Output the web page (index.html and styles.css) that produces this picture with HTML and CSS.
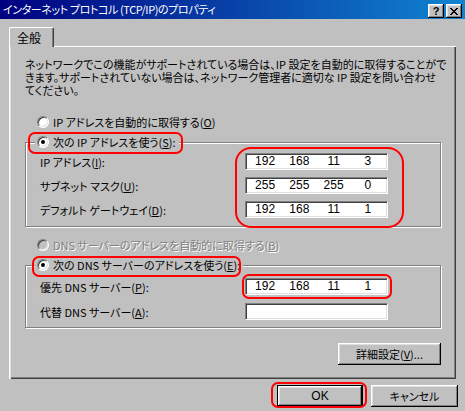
FILE: index.html
```html
<!DOCTYPE html>
<html lang="ja">
<head>
<meta charset="utf-8">
<title>インターネット プロトコル (TCP/IP)のプロパティ</title>
<link rel="stylesheet" href="styles.css">
</head>
<body>
<div class="titlebar">
  <span class="title">インターネット プロトコル (TCP/IP)のプロパティ</span>
  <div class="caption-buttons">
    <div class="cap-btn help">?</div>
    <div class="cap-btn close">
      <svg width="8" height="7" viewBox="0 0 8 7"><path d="M0 0h2v1h-2zM6 0h2v1h-2zM1 1h2v1h-2zM5 1h2v1h-2zM2 2h4v1h-4zM3 3h2v1h-2zM2 4h4v1h-4zM1 5h2v1h-2zM5 5h2v1h-2zM0 6h2v1h-2zM6 6h2v1h-2z" fill="#000"/></svg>
    </div>
  </div>
</div>

<div class="tabstrip">
  <div class="tab">全般</div>
  <div class="tab-fill"></div>
</div>

<div class="panel">
  <p class="intro">ネットワークでこの機能がサポートされている場合は、IP 設定を自動的に取得することがで<br>きます。サポートされていない場合は、ネットワーク管理者に適切な IP 設定を問い合わせ<br>てください。</p>

  <div class="radio-row row-auto-ip"><span class="radio"></span><span>IP アドレスを自動的に取得する(<u>O</u>)</span></div>

  <div class="group group-ip">
    <div class="legend"><span class="radio checked"></span><span>次の IP アドレスを使う(<u>S</u>):</span></div>
    <div class="field-row first"><span class="label">IP アドレス(<u>I</u>):</span><div class="ipbox"><span>192</span><span>168</span><span>11</span><span>3</span></div></div>
    <div class="field-row"><span class="label">サブネット マスク(<u>U</u>):</span><div class="ipbox"><span>255</span><span>255</span><span>255</span><span>0</span></div></div>
    <div class="field-row"><span class="label">デフォルト ゲートウェイ(<u>D</u>):</span><div class="ipbox"><span>192</span><span>168</span><span>11</span><span>1</span></div></div>
  </div>

  <div class="radio-row disabled row-auto-dns"><span class="radio"></span><span>DNS サーバーのアドレスを自動的に取得する(<u>B</u>)</span></div>

  <div class="group group-dns">
    <div class="legend"><span class="radio checked"></span><span>次の DNS サーバーのアドレスを使う(<u>E</u>):</span></div>
    <div class="field-row first"><span class="label">優先 DNS サーバー(<u>P</u>):</span><div class="ipbox"><span>192</span><span>168</span><span>11</span><span>1</span></div></div>
    <div class="field-row"><span class="label">代替 DNS サーバー(<u>A</u>):</span><div class="ipbox"><span></span><span></span><span></span><span></span></div></div>
  </div>

  <div class="btn btn-advanced">詳細設定(<u>V</u>)...</div>
</div>

<div class="dialog-buttons">
  <div class="btn btn-ok">OK</div>
  <div class="btn btn-cancel">キャンセル</div>
</div>

<div class="ring ring-a"></div>
<div class="ring ring-b"></div>
<div class="ring ring-c"></div>
<div class="ring ring-d"></div>
<div class="ring ring-e"></div>
</body>
</html>
```

FILE: styles.css
```css
* { box-sizing: border-box; }
html, body { margin: 0; padding: 0; }
body {
  width: 465px;
  height: 411px;
  overflow: hidden;
  position: relative;
  background: #c0c0c0;
  color: #000;
  font-family: "Noto Sans CJK JP", "Noto Sans", sans-serif;
  font-size: 11px;
  font-feature-settings: "palt" 1;
}
u { text-decoration: underline; text-underline-offset: 1px; }

/* title bar */
.titlebar {
  height: 19px;
  display: flex;
  justify-content: space-between;
  align-items: flex-start;
  padding: 0 3px;
  background: linear-gradient(to right, #000080, #1084d0);
  color: #fff;
}
.title { line-height: 19px; white-space: nowrap; letter-spacing: -0.4px; }
.caption-buttons { display: flex; gap: 2px; padding-top: 4px; }
.cap-btn {
  width: 16px;
  height: 14px;
  display: flex;
  align-items: center;
  justify-content: center;
  background: #c0c0c0;
  color: #000;
  box-shadow: inset -1px -1px #000, inset 1px 1px #fff, inset -2px -2px #808080, inset 2px 2px #dfdfdf;
}
.help {
  font-family: "Liberation Sans", sans-serif;
  font-weight: bold;
  font-size: 11px;
  line-height: 14px;
}

/* tabs */
.tabstrip {
  margin-top: 8px;
  width: 456px;
  height: 20px;
  padding-left: 9px;
  display: flex;
}
.tab {
  width: 45px;
  height: 20px;
  padding-left: 7px;
  display: flex;
  align-items: center;
  font-size: 12px;
  border-left: 1px solid #fff;
  border-top: 1px solid #fff;
  border-right: 1px solid #404040;
  border-radius: 2px 2px 0 0;
  box-shadow: inset -1px 0 #808080;
}
.tab-fill { flex: 1; border-bottom: 1px solid #fff; }

/* panel */
.panel {
  margin-left: 9px;
  width: 447px;
  height: 332px;
  padding: 10.5px 15px 0 16px;
  display: flex;
  flex-direction: column;
  box-shadow: inset 1px 0 #fff, inset 2px 0 #dfdfdf, inset -1px -1px #404040, inset -2px -2px #808080;
}
.intro {
  margin: 0;
  line-height: 13px;
  white-space: nowrap;
}

.radio-row {
  height: 16px;
  display: flex;
  align-items: center;
  gap: 4px;
  padding-left: 12px;
  white-space: nowrap;
}
.row-auto-ip { margin-top: 17.5px; }
.row-auto-dns { margin-top: 10px; }
.radio-row.disabled { color: #808080; text-shadow: 1px 1px 0 #fff; }

.radio {
  width: 12px;
  height: 12px;
  flex: none;
  border-radius: 50%;
  background: #fff;
  border: 1px solid;
  border-color: #808080 #fff #fff #808080;
  box-shadow: inset 1px 1px 0 #404040, inset -1px -1px 0 #dfdfdf;
  position: relative;
}
.disabled .radio { background: #c0c0c0; }
.radio.checked::after {
  content: "";
  position: absolute;
  left: 3px;
  top: 3px;
  width: 4px;
  height: 4px;
  border-radius: 50%;
  background: #000;
}

.group {
  width: 416px;
  border: 1px solid #808080;
  box-shadow: inset 1px 1px 0 #fff, 1px 1px 0 #fff;
  display: flex;
  flex-direction: column;
}
.group-ip { margin-top: 12px; padding-bottom: 8px; }
.group-dns { margin-top: 12px; padding-bottom: 7px; }

.legend {
  align-self: flex-start;
  height: 16px;
  margin-top: -9px;
  margin-left: 9px;
  padding: 0 3px 0 2px;
  display: flex;
  align-items: center;
  gap: 4px;
  background: #c0c0c0;
  white-space: nowrap;
}

.field-row {
  height: 17px;
  display: flex;
  align-items: center;
  padding-left: 14px;
  margin-top: 7px;
  white-space: nowrap;
}
.group-dns .field-row { margin-top: 8px; }
.group-ip .field-row.first { margin-top: 3px; }
.group-dns .field-row.first { margin-top: 5px; }
.label { width: 205px; flex: none; }

.ipbox {
  width: 143px;
  height: 17px;
  padding: 0 2px;
  display: grid;
  grid-template-columns: repeat(4, 1fr);
  align-items: center;
  text-align: center;
  background: #fff;
  border: 1px solid;
  border-color: #808080 #fff #fff #808080;
  box-shadow: inset 1px 1px 0 #404040, inset -1px -1px 0 #dfdfdf;
  font-family: "Liberation Sans", sans-serif;
  font-size: 12px;
  line-height: 15px;
}

/* buttons */
.btn {
  height: 22px;
  display: flex;
  align-items: center;
  justify-content: center;
  background: #c0c0c0;
  box-shadow: inset -1px -1px #000, inset 1px 1px #fff, inset -2px -2px #808080, inset 2px 2px #dfdfdf;
  white-space: nowrap;
}
.btn-advanced { align-self: flex-end; width: 103px; margin-top: 15px; }

.dialog-buttons {
  margin-top: 6px;
  padding-right: 7px;
  display: flex;
  justify-content: flex-end;
  gap: 8px;
}
.btn-ok {
  width: 86px;
  border: 1px solid #000;
  font-family: "Liberation Sans", sans-serif;
  font-size: 12px;
}
.btn-cancel { width: 87px; }

/* red highlight annotations */
.ring {
  position: absolute;
  border: 2px solid #f00;
  border-radius: 7px;
  pointer-events: none;
}
.ring-a { left: 28px; top: 132px; width: 155px; height: 22px; }
.ring-b { left: 235px; top: 147px; width: 169px; height: 81px; border-radius: 16px; }
.ring-c { left: 32px; top: 256px; width: 209px; height: 21px; }
.ring-d { left: 242px; top: 274px; width: 150px; height: 25px; }
.ring-e { left: 271px; top: 382px; width: 96px; height: 26px; }
```
